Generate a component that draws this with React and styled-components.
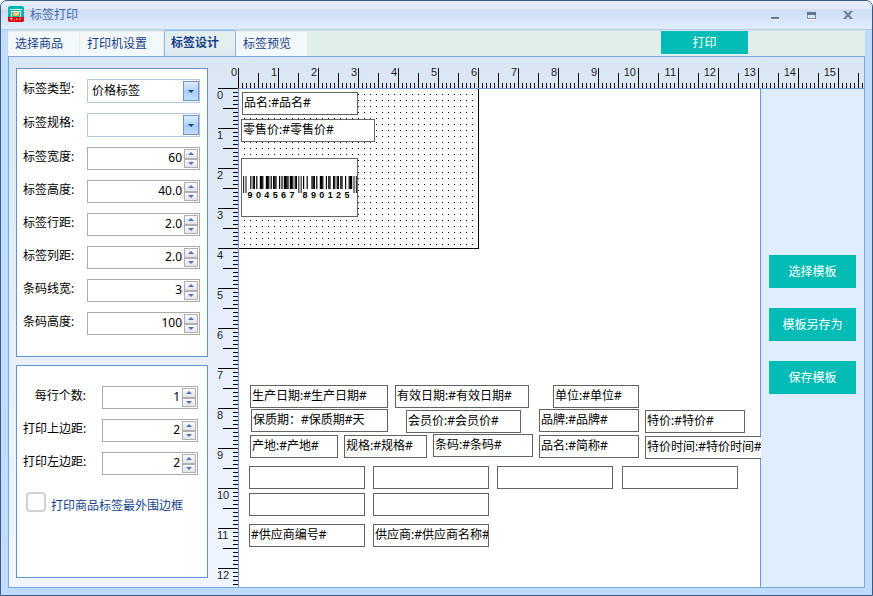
import React, { useLayoutEffect, useRef, useState } from "react";
import styled, { createGlobalStyle, css } from "styled-components";

const SANS = '"Noto Sans", "Noto Sans CJK SC", sans-serif';
const CJK = '"Noto Sans CJK SC", sans-serif';

const GlobalStyle = createGlobalStyle`
  *, *::before, *::after { box-sizing: border-box; }
  body { margin: 0; background: #fff; }
  button, input, select { font: inherit; color: inherit; }
`;

const Window = styled.div`
  display: flex;
  flex-direction: column;
  min-height: 100vh;
  border: 1px solid #3b5a82;
  border-radius: 7px 7px 0 0;
  background: #bfdbff;
  overflow: hidden;
  font: 12px/16px ${SANS};
  color: #000;
`;

const TitleBar = styled.header`
  display: flex;
  align-items: center;
  gap: 6px;
  height: 29px;
  padding: 0 16px 3px 7px;
  border-bottom: 1px solid #b0cff0;
  background: linear-gradient(#e9f0fc 0, #dfe8f9 8px, #cddcf5 9px, #dfedfd 28px);
`;

const Title = styled.h1`
  flex: 1;
  margin: 0;
  font: 12px/16px ${CJK};
  color: #4668a8;
`;

const WindowButtons = styled.div`
  display: flex;
  gap: 20px;
`;

const WindowButton = styled.button`
  display: flex;
  width: 16px;
  height: 16px;
  padding: 0;
  border: 0;
  background: none;
`;

const Frame = styled.div`
  flex: 1;
  display: flex;
  flex-direction: column;
  padding: 0 7px 7px;
`;

const TabRow = styled.nav`
  display: flex;
  align-items: flex-end;
  justify-content: space-between;
  height: 26px;
  background: #e2eeec;
  border-top: 1px solid #dcdde9;
`;

const TabList = styled.div`
  display: flex;
  align-items: flex-end;
`;

const Tab = styled.button`
  height: 24px;
  padding: 0 16px 3px 6px;
  border: 1px solid transparent;
  border-bottom: 0;
  border-right-color: #e6eff0;
  background: #f3f8fa;
  color: #15428b;
  font: 12px/16px ${CJK};
  ${(p) =>
    p.$active &&
    css`
      height: 27px;
      margin-bottom: -1px;
      padding-bottom: 4px;
      border-color: #8ab6e8;
      border-radius: 2px 2px 0 0;
      background: linear-gradient(#e3efee 60%, #dce7f4);
      font-weight: 700;
    `}
`;

const ActionButton = styled.button`
  width: 87px;
  height: 33px;
  padding: 0 0 2px;
  border: 0;
  background: #00bcb4;
  color: #fff;
  font: 12px/16px ${CJK};
`;

const PrintButton = styled(ActionButton)`
  height: 23px;
  margin: 0 117px 2px 0;
`;

const Body = styled.main`
  flex: 1;
  display: grid;
  grid-template-columns: 192px minmax(0, 1fr);
  gap: 6px;
  padding: 8px 0 0 7px;
  border: 1px solid #7aa9e0;
  background: linear-gradient(#dbe6f4, #eff6ff);
`;

const Settings = styled.div`
  display: flex;
  flex-direction: column;
  gap: 8px;
  padding: 3px 0 9px;
`;

const Panel = styled.section`
  display: flex;
  flex-direction: column;
  gap: 10px;
  border: 1px solid #6492d2;
  background: #fff;
`;

const LabelPanel = styled(Panel)`
  padding: 10px 7px 21px 6px;
`;

const PagePanel = styled(Panel)`
  flex: 1;
  padding: 20px 9px 20px 6px;
`;

const Field = styled.div`
  display: grid;
  grid-template-columns: 64px minmax(0, 1fr);
  column-gap: ${(p) => (p.$wide ? "15px" : "0")};
  align-items: center;
`;

const FieldLabel = styled.label`
  padding-bottom: 4px;
  text-align: ${(p) => (p.$wide ? "right" : "left")};
  padding-right: ${(p) => (p.$wide ? "1px" : "0")};
  white-space: nowrap;
`;

const SelectBox = styled.div`
  display: grid;
  grid-template-columns: minmax(0, 1fr) 16px;
  height: 24px;
  padding: 1px 0 1px 1px;
  border: 1px solid #b3c7e1;
  background: #fff;
`;

const SelectInput = styled.select`
  grid-area: 1 / 1 / 2 / 3;
  appearance: none;
  padding: 0 20px 0 3px;
  border: 0;
  outline: 0;
  background: none;
`;

const SelectArrow = styled.span`
  grid-area: 1 / 2;
  display: flex;
  align-items: center;
  justify-content: center;
  border: 1px solid #7296c8;
  background: linear-gradient(#dcebff, #b5d3fa 50%, #a6cbfa 50%, #c3defd);
  pointer-events: none;
`;

const SpinBox = styled.div`
  display: flex;
  gap: 2px;
  height: 23px;
  padding: 1px;
  border: 1px solid #ababab;
  background: #fff;
`;

const SpinInput = styled.input`
  flex: 1;
  min-width: 0;
  padding: 0 0 2px;
  border: 0;
  outline: 0;
  background: none;
  text-align: right;
`;

const SpinButtons = styled.div`
  display: flex;
  flex-direction: column;
  width: 14px;
`;

const SpinButton = styled.button`
  flex: 1;
  display: flex;
  align-items: center;
  justify-content: center;
  min-height: 0;
  padding: 0;
  border: 1px solid #b0b0b4;
  background: linear-gradient(#fafafa, #e4e4e8);
`;

const CheckLabel = styled.label`
  display: flex;
  gap: 5px;
  margin: 7px 0 0 3px;
  color: #15428b;
  font-family: ${CJK};
  white-space: nowrap;
`;

const CheckInput = styled.input`
  appearance: none;
  width: 20px;
  height: 20px;
  margin: 0;
  border: 2px solid #d0d0d0;
  border-radius: 4px;
  background: #fff;
  &:checked { background: #00bcb4; }
`;

const CheckText = styled.span`
  padding-top: 5px;
`;

const Designer = styled.div`
  display: grid;
  grid-template-columns: 24px minmax(0, 1fr) 103px;
  grid-template-rows: 23px minmax(0, 1fr);
`;

const TopRuler = styled.svg`
  grid-area: 1 / 1 / 2 / 4;
  width: 100%;
  height: 23px;
`;

/* Size containment keeps the drawn ticks from stretching the page. */
const SideRuler = styled.div`
  grid-area: 2 / 1;
  contain: size;
  overflow: hidden;
`;

const RulerText = styled.text`
  font: 11px "Liberation Sans", Arial, sans-serif;
  fill: #1c1c24;
`;

const Canvas = styled.div`
  grid-area: 2 / 2;
  position: relative;
  overflow: hidden;
  border: 1px solid #6b98d6;
  border-width: 1px 0 0 1px;
  background: #fff;
  box-shadow: inset -1px 0 #6b98d6;
`;

const Sheet = styled.div`
  width: 241px;
  height: 161px;
  margin: -1px 0 0 -1px;
  border: 1px solid #000;
  background:
    linear-gradient(90deg, #fff 5px, transparent 5px) 0 0 / 6px 6px,
    linear-gradient(#fff 5px, #000 5px) 0 0 / 6px 6px;
`;

const Item = styled.div`
  position: absolute;
  left: ${(p) => p.$x}px;
  top: ${(p) => p.$y}px;
  width: ${(p) => p.$w}px;
  height: ${(p) => p.$h || 23}px;
  padding: 2px 0 0 1px;
  border: 1px solid #636363;
  background: #fff;
  overflow: hidden;
  white-space: nowrap;
`;

const SidePanel = styled.aside`
  grid-area: 2 / 3;
  display: flex;
  flex-direction: column;
  align-items: center;
  gap: 20px;
  padding-top: 166px;
  border-top: 1px solid #6b98d6;
  background: #e0edff;
`;

const BarcodeDigit = styled.text`
  font: bold 9px "Liberation Sans", Arial, sans-serif;
  text-anchor: middle;
`;

const L_CODES = ["0001101", "0011001", "0010011", "0111101", "0100011", "0110001", "0101111", "0111011", "0110111", "0001011"];
const invert = (s) => [...s].map((c) => (c === "1" ? "0" : "1")).join("");
const R_CODES = L_CODES.map(invert);
const G_CODES = R_CODES.map((s) => [...s].reverse().join(""));

function Barcode({ left, right }) {
  const parity = "LGGGLL";
  const modules =
    "101" +
    [...left].map((d, i) => (parity[i] === "L" ? L_CODES : G_CODES)[d]).join("") +
    "01010" +
    [...right].map((d) => R_CODES[d]).join("") +
    "101";
  const isGuard = (i) => i < 3 || i > 91 || (i > 44 && i < 50);
  const m = 1.2;
  return (
    <svg width="115" height="50" viewBox="0 0 115 50" role="img" aria-label={left + right}>
      {[...modules].map((bit, i) =>
        bit === "1" ? (
          <rect key={i} x={i * m} y="15" width={m} height={isGuard(i) ? 17 : 13} fill={isGuard(i) ? "#333" : "#000"} />
        ) : null
      )}
      {[...left].map((d, i) => (
        <BarcodeDigit key={i} x={7 + i * 8.4} y="37">{d}</BarcodeDigit>
      ))}
      {[...right].map((d, i) => (
        <BarcodeDigit key={i} x={62 + i * 8.4} y="37">{d}</BarcodeDigit>
      ))}
    </svg>
  );
}

const UNIT = 40;
const STEP = 4;
const upTo = (n) => Array.from({ length: Math.max(0, Math.floor(n) + 1) }, (_, i) => i);
const tickLength = (i) => (i % 10 === 0 ? 20 : i % 5 === 0 ? 15 : 5);

function useLength(side) {
  const ref = useRef(null);
  const [length, setLength] = useState(0);
  useLayoutEffect(() => {
    const measure = () => setLength(ref.current.getBoundingClientRect()[side]);
    measure();
    const observer = new ResizeObserver(measure);
    observer.observe(ref.current);
    return () => observer.disconnect();
  }, [side]);
  return [ref, length];
}

function HorizontalRuler() {
  const [ref, width] = useLength("width");
  const run = width - 25;
  return (
    <TopRuler ref={ref}>
      <path d={upTo(run / STEP).map((i) => `M${24 + i * STEP} ${23 - tickLength(i)}h1V23h-1z`).join("")} />
      {upTo(run / UNIT).map((n) => (
        <RulerText key={n} x={24 + n * UNIT - (n > 9 ? 2 : 1)} y="11" textAnchor="end">{n}</RulerText>
      ))}
    </TopRuler>
  );
}

function VerticalRuler() {
  const [ref, height] = useLength("height");
  return (
    <SideRuler ref={ref}>
      <svg width="24" height={height}>
        <path d={upTo((height - 1) / STEP).map((i) => `M${24 - tickLength(i)} ${i * STEP}H24v1H${24 - tickLength(i)}z`).join("")} />
        {upTo((height - 14) / UNIT).map((n) => (
          <RulerText key={n} x="3" y={n * UNIT + 11}>{n}</RulerText>
        ))}
      </svg>
    </SideRuler>
  );
}

function Triangle({ up, color = "#5470b8" }) {
  return (
    <svg width="6" height="3" viewBox="0 0 6 3" fill={color}>
      <path d={up ? "M0 3L3 0L6 3z" : "M0 0H6L3 3z"} />
    </svg>
  );
}

function SelectField({ id, label, options }) {
  return (
    <Field>
      <FieldLabel htmlFor={id}>{label}</FieldLabel>
      <SelectBox>
        <SelectInput id={id}>
          {options.map((o) => <option key={o}>{o}</option>)}
        </SelectInput>
        <SelectArrow><Triangle color="#15428b" /></SelectArrow>
      </SelectBox>
    </Field>
  );
}

function SpinField({ id, label, initial, wide }) {
  const [value, setValue] = useState(initial);
  const digits = initial.includes(".") ? 1 : 0;
  const step = (d) => setValue((v) => Math.max(0, Number(v) + d).toFixed(digits));
  return (
    <Field $wide={wide}>
      <FieldLabel htmlFor={id} $wide={wide}>{label}</FieldLabel>
      <SpinBox>
        <SpinInput id={id} value={value} onChange={(e) => setValue(e.target.value)} />
        <SpinButtons>
          <SpinButton type="button" aria-label="+" onClick={() => step(1)}><Triangle up /></SpinButton>
          <SpinButton type="button" aria-label="-" onClick={() => step(-1)}><Triangle /></SpinButton>
        </SpinButtons>
      </SpinBox>
    </Field>
  );
}

function Logo() {
  return (
    <svg width="16" height="16" viewBox="0 0 16 16">
      <rect width="16" height="16" rx="2" fill="#00b8ae" />
      <path d="M2 3h12v1h-12z" fill="#e8fbf8" />
      <path d="M3.500 11V5.500h9V11" fill="none" stroke="#e8fbf8" />
      <rect x="5" y="6" width="6" height="4" fill="#f3b64c" />
      <path d="M6 7.500l2 1.500L11 6" fill="none" stroke="#e8fbf8" />
      <path d="M0 11h16v3a2 2 0 0 1-2 2H2a2 2 0 0 1-2-2z" fill="#e60012" />
      <path d="M2 12.500h2l-1 2M6 14h1M8 13h1v1M11 13h2" fill="none" stroke="#fff" strokeWidth=".8" />
    </svg>
  );
}

const TABS = ["选择商品", "打印机设置", "标签设计", "标签预览"];

const LABEL_SPINS = [
  ["标签宽度:", "60"],
  ["标签高度:", "40.0"],
  ["标签行距:", "2.0"],
  ["标签列距:", "2.0"],
  ["条码线宽:", "3"],
  ["条码高度:", "100"],
];

const PAGE_SPINS = [
  ["每行个数:", "1"],
  ["打印上边距:", "2"],
  ["打印左边距:", "2"],
];

const ITEMS = [
  { x: 3, y: 3, w: 116, text: "品名:#品名#" },
  { x: 2, y: 30, w: 134, text: "零售价:#零售价#" },
  { x: 11, y: 296, w: 138, text: "生产日期:#生产日期#" },
  { x: 156, y: 296, w: 134, text: "有效日期:#有效日期#" },
  { x: 314, y: 296, w: 86, text: "单位:#单位#" },
  { x: 12, y: 320, w: 137, text: "保质期：#保质期#天" },
  { x: 167, y: 321, w: 115, text: "会员价:#会员价#" },
  { x: 300, y: 320, w: 100, text: "品牌:#品牌#" },
  { x: 406, y: 321, w: 100, text: "特价:#特价#" },
  { x: 11, y: 346, w: 88, text: "产地:#产地#" },
  { x: 105, y: 346, w: 83, text: "规格:#规格#" },
  { x: 194, y: 345, w: 100, text: "条码:#条码#" },
  { x: 300, y: 346, w: 100, text: "品名:#简称#" },
  { x: 406, y: 347, w: 134, text: "特价时间:#特价时间#" },
  { x: 10, y: 377, w: 116 },
  { x: 134, y: 377, w: 116 },
  { x: 258, y: 377, w: 116 },
  { x: 383, y: 377, w: 116 },
  { x: 10, y: 404, w: 116 },
  { x: 134, y: 404, w: 116 },
  { x: 10, y: 435, w: 116, text: "#供应商编号#" },
  { x: 134, y: 435, w: 116, text: "供应商:#供应商名称#" },
];

export default function App() {
  const [tab, setTab] = useState(2);
  return (
    <Window>
      <GlobalStyle />
      <TitleBar>
        <Logo />
        <Title>标签打印</Title>
        <WindowButtons>
          <WindowButton aria-label="最小化">
            <svg width="16" height="16"><path d="M3 11h8v2H3z" fill="#66758f" /><path d="M3 13h8v1H3z" fill="#fff" /></svg>
          </WindowButton>
          <WindowButton aria-label="最大化">
            <svg width="16" height="16" shapeRendering="crispEdges">
              <path d="M3 6h9v7H3z" fill="#dce7f6" /><path d="M3 6h9v3H3z" fill="#66758f" />
              <path d="M3 9h1v3h7V9h1v4H3z" fill="#7d8fae" /><path d="M3 13h9v1H3z" fill="#fff" />
            </svg>
          </WindowButton>
          <WindowButton aria-label="关闭">
            <svg width="16" height="16"><path d="M3 5h3l2 2.500L10 5h3L9.500 9L13 13h-3L8 10.500L6 13H3L6.500 9z" fill="#71809c" /></svg>
          </WindowButton>
        </WindowButtons>
      </TitleBar>
      <Frame>
        <TabRow>
          <TabList role="tablist">
            {TABS.map((name, i) => (
              <Tab key={name} role="tab" aria-selected={tab === i} $active={tab === i} onClick={() => setTab(i)}>
                {name}
              </Tab>
            ))}
          </TabList>
          <PrintButton>打印</PrintButton>
        </TabRow>
        <Body>
          <Settings>
            <LabelPanel>
              <SelectField id="label-type" label="标签类型:" options={["价格标签"]} />
              <SelectField id="label-spec" label="标签规格:" options={[""]} />
              {LABEL_SPINS.map(([label, value], i) => (
                <SpinField key={label} id={`label-${i}`} label={label} initial={value} />
              ))}
            </LabelPanel>
            <PagePanel>
              {PAGE_SPINS.map(([label, value], i) => (
                <SpinField key={label} id={`page-${i}`} label={label} initial={value} wide />
              ))}
              <CheckLabel>
                <CheckInput type="checkbox" />
                <CheckText>打印商品标签最外围边框</CheckText>
              </CheckLabel>
            </PagePanel>
          </Settings>
          <Designer>
            <HorizontalRuler />
            <VerticalRuler />
            <Canvas>
              <Sheet />
              {ITEMS.map((it, i) => (
                <Item key={i} $x={it.x} $y={it.y} $w={it.w}>{it.text}</Item>
              ))}
              <Item $x={2} $y={69} $w={117} $h={59}>
                <Barcode left="904567" right="890125" />
              </Item>
            </Canvas>
            <SidePanel>
              <ActionButton>选择模板</ActionButton>
              <ActionButton>模板另存为</ActionButton>
              <ActionButton>保存模板</ActionButton>
            </SidePanel>
          </Designer>
        </Body>
      </Frame>
    </Window>
  );
}
